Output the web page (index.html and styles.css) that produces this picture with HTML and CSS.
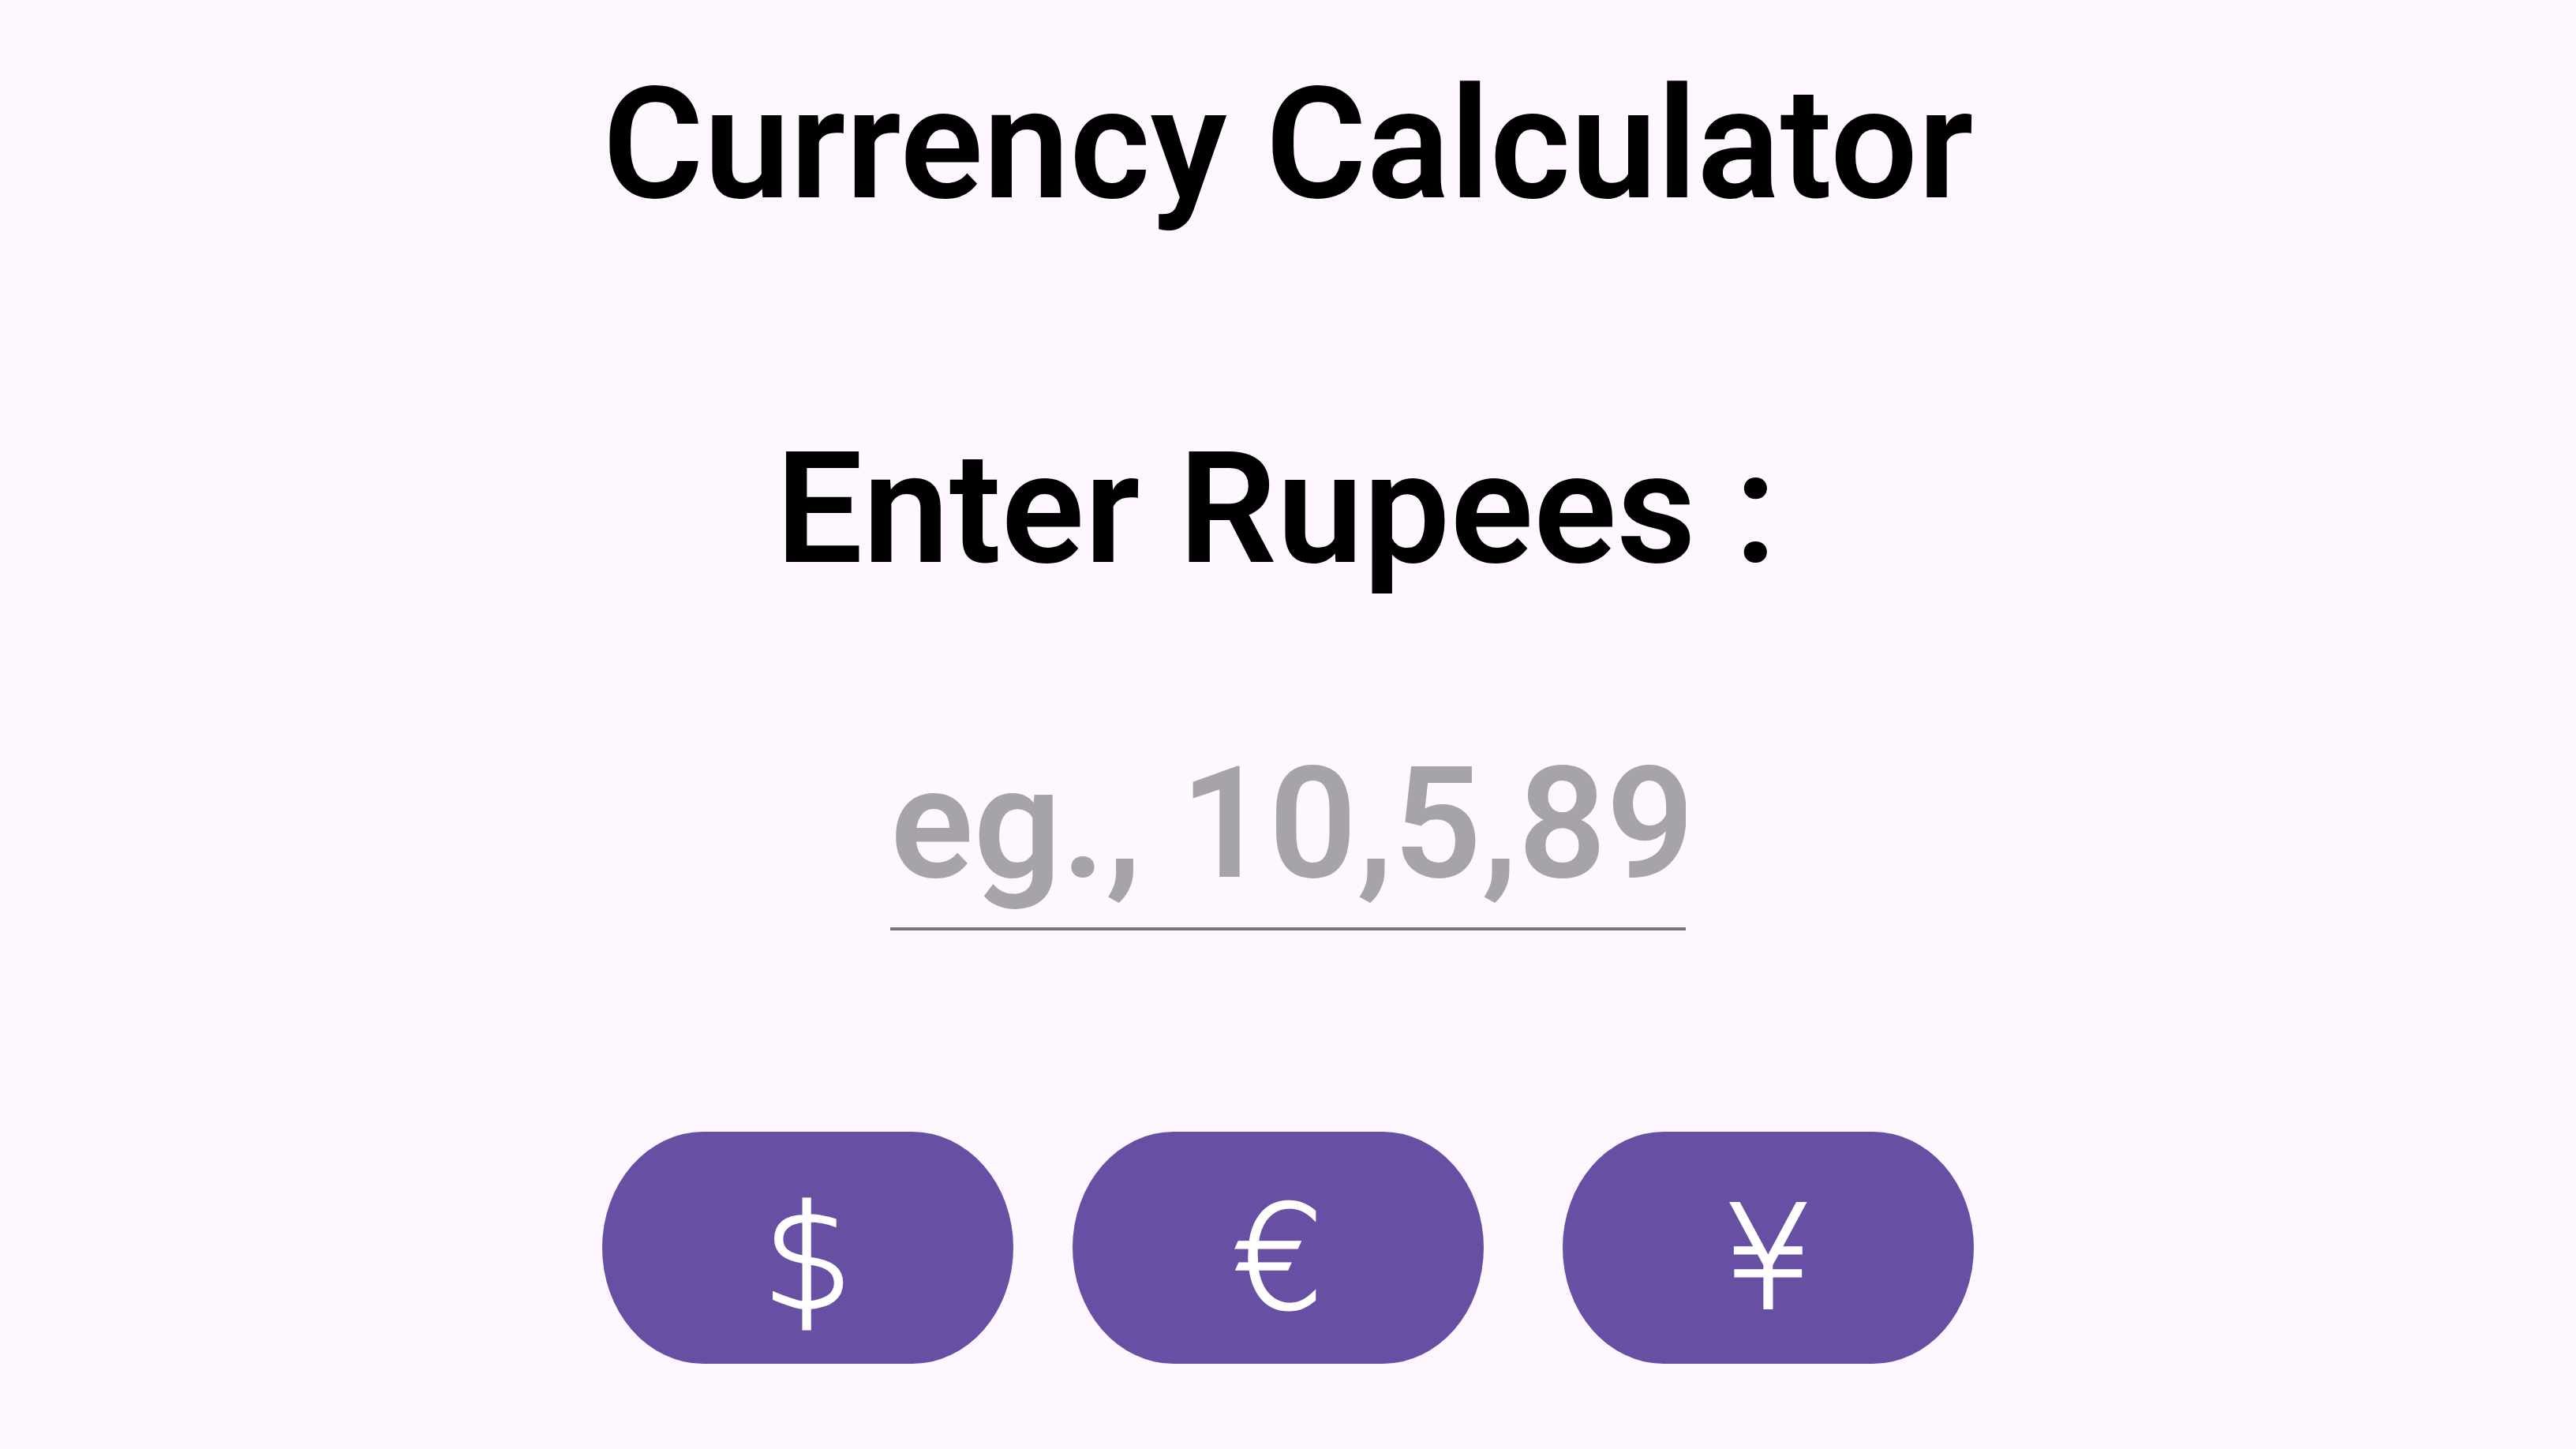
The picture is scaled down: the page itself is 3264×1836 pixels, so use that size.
FILE: index.html
```html
<!DOCTYPE html>
<html lang="en">
<head>
<meta charset="utf-8">
<title>Currency Calculator</title>
<link rel="stylesheet" href="styles.css">
</head>
<body>
<main class="screen">
  <h1 class="title">Currency Calculator</h1>
  <label class="label" for="rupees">Enter Rupees :</label>
  <input class="amount" id="rupees" type="text" placeholder="eg., 10,5,89">
  <div class="buttons">
    <button class="btn" type="button">$</button>
    <button class="btn" type="button">€</button>
    <button class="btn btn-last" type="button">¥</button>
  </div>
</main>
</body>
</html>
```

FILE: styles.css
```css
html, body {
  margin: 0;
  padding: 0;
  background: #fef7ff;
}

.screen {
  width: 3264px;
  height: 1836px;
  display: flex;
  flex-direction: column;
  align-items: center;
  font-family: Roboto, "Noto Sans", sans-serif;
  box-sizing: border-box;
  padding-top: 66px;
}

.title,
.label {
  margin: 0;
  font-size: 196px;
  font-weight: 600;
  line-height: 1.2;
  color: #000;
}

.label {
  display: block;
  margin-top: 227px;
  margin-left: -30px;
}

.amount {
  margin-top: 163px;
  width: 1008px;
  box-sizing: border-box;
  padding: 0 0 14px 0;
  border: none;
  border-bottom: 4px solid #79747e;
  background: transparent;
  outline: none;
  font-family: Roboto, "Noto Sans", sans-serif;
  font-size: 196px;
  font-weight: 600;
  line-height: 1.2;
  height: 253px;
  text-align: center;
  color: #1d1b20;
}

.amount::placeholder {
  color: #a7a3ab;
  opacity: 1;
}

.buttons {
  margin-top: 255px;
  display: flex;
  gap: 75px;
}

.btn {
  width: 521px;
  height: 294px;
  border: none;
  border-radius: 128px / 147px;
  background: #6750a4;
  color: #fff;
  -webkit-text-stroke: 3px #fff;
  font-family: "DejaVu Sans", sans-serif;
  font-size: 182px;
  font-weight: 200;
  line-height: 1;
  padding: 26px 0 0 0;
  display: flex;
  align-items: center;
  justify-content: center;
  cursor: pointer;
}

.btn-last {
  margin-left: 25px;
}
```
